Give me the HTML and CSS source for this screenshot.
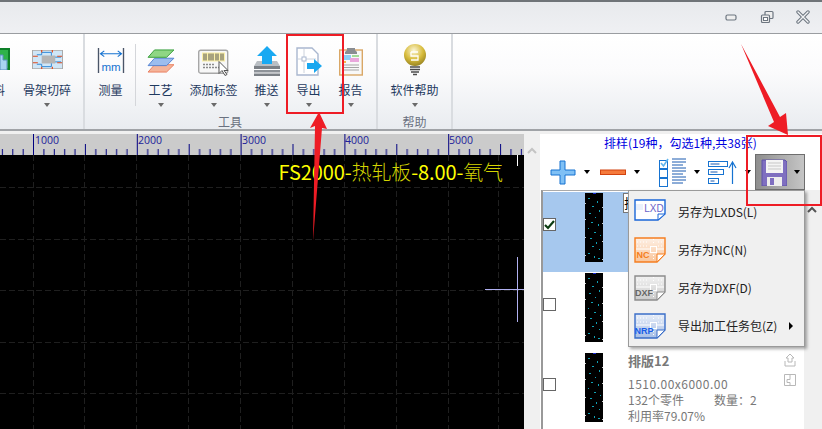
FILE: index.html
```html
<!DOCTYPE html>
<html lang="zh-CN">

<head>
  <meta charset="UTF-8">
  <meta name="viewport" content="width=device-width, initial-scale=1.0">
  <title>排样</title>
  <link rel="stylesheet" href="styles.css">
</head>

<body>

  <!-- shared drawings -->
  <svg class="sprites" width="0" height="0">
    <defs>
      <linearGradient id="docFill" x1="0" y1="0" x2="0" y2="1">
        <stop offset="0" stop-color="#fff" stop-opacity=".75" />
        <stop offset="1" stop-color="#fff" stop-opacity="0" />
      </linearGradient>
    </defs>
    <symbol id="sheet" viewBox="0 0 18 69">
      <rect width="18" height="69" fill="#000" />
      <g fill="#12a0b4">
        <rect x="3" y="5" width="2" height="1" /><rect x="12" y="8" width="1" height="2" /><rect x="7" y="13" width="2" height="1" />
        <rect x="14" y="17" width="1" height="2" /><rect x="4" y="20" width="2" height="1" /><rect x="10" y="24" width="1" height="1" />
        <rect x="6" y="29" width="2" height="1" /><rect x="13" y="31" width="1" height="2" /><rect x="3" y="35" width="1" height="1" />
        <rect x="9" y="39" width="2" height="1" /><rect x="15" y="42" width="1" height="1" /><rect x="5" y="45" width="2" height="1" />
        <rect x="11" y="49" width="1" height="2" /><rect x="7" y="53" width="2" height="1" /><rect x="14" y="56" width="1" height="1" />
        <rect x="3" y="60" width="2" height="1" /><rect x="9" y="63" width="1" height="2" /><rect x="13" y="65" width="2" height="1" />
      </g>
      <g fill="#ccc">
        <rect x="0" y="10" width="1" height="1" /><rect x="17" y="14" width="1" height="1" /><rect x="0" y="26" width="1" height="1" />
        <rect x="17" y="30" width="1" height="1" /><rect x="0" y="44" width="1" height="1" /><rect x="17" y="48" width="1" height="1" />
        <rect x="0" y="62" width="1" height="1" /><rect x="17" y="66" width="1" height="1" />
      </g>
      <rect x="8" y="0" width="3" height="1" fill="#1a2ad0" />
    </symbol>
    <symbol id="doc" viewBox="0 0 32 26">
      <path d="M1 1h30v16l-8 8H1z" fill="#fff" />
      <path d="M1 1h30v16l-8 8H1z" fill="currentColor" fill-opacity=".45" />
      <path d="M1 1h30v16l-8 8H1z" fill="url(#docFill)" />
      <path d="M1 1h30v16l-8 8H1z" fill="none" stroke="currentColor" stroke-width="1.4" />
      <path d="M3 5h11M24 5h6M3 9h11M24 9h6M19.500 2v5M19.500 15v8" stroke="#fff" stroke-dasharray="1 2" />
      <path d="M2 12h14M23 12h7" stroke="#fff" />
      <rect x="16.500" y="9.500" width="6" height="6" fill="none" stroke="#fff" />
      <path d="M23 25v-8h8z" fill="#fff" stroke="currentColor" />
    </symbol>
  </svg>

  <div class="titlebar">
    <svg class="win-btn" width="14" height="14" viewBox="0 0 14 14">
      <rect x="2" y="5" width="10" height="5" rx="1.5" fill="#eee" stroke="#6d7680" stroke-width="1.2" />
    </svg>
    <svg class="win-btn" width="14" height="14" viewBox="0 0 14 14">
      <rect x="5" y="1.5" width="8" height="7" rx="1" fill="#eee" stroke="#6d7680" stroke-width="1.2" />
      <rect x="1.5" y="5" width="8" height="7.5" rx="1" fill="#eee" stroke="#6d7680" stroke-width="1.2" />
      <rect x="3.5" y="7.5" width="4" height="3" fill="#fff" stroke="#6d7680" />
    </svg>
    <svg class="win-btn" width="14" height="14" viewBox="0 0 14 14">
      <path d="M2 2l10 10M12 2L2 12" stroke="#6d7680" stroke-width="3.4" stroke-linecap="round" />
      <path d="M2 2l10 10M12 2L2 12" stroke="#f2f3f5" stroke-width="1.4" stroke-linecap="round" />
    </svg>
  </div>

  <div class="ribbon">
    <div class="group group-edit">
      <div class="tool tool-cut">
        <span class="tool-icon">
          <svg class="icon-stock" width="30" height="22" viewBox="0 0 30 22">
            <rect x="20" y="0" width="10" height="22" fill="#0d7f28" />
            <rect x="20" y="2" width="8" height="18" fill="#2fb24a" />
            <path d="M20 22V7h3v5h4v10z" fill="#a8d4f4" stroke="#5b8fc0" />
          </svg>
        </span>
        <span class="tool-name">料</span>
        <span class="caret"></span>
      </div>
      <div class="tool tool-bone">
        <span class="tool-icon">
          <svg class="icon-bone" width="31" height="19" viewBox="0 0 32 24" preserveAspectRatio="none">
            <rect x=".5" y=".5" width="31" height="23" fill="#cfe6f7" stroke="#a9a9a9" />
            <path d="M5 6h5V3h10v6h10M5 18h5v3h10v-6h10" fill="none" stroke="#1e7fd6" />
            <path d="M10 7h14v10H10z" fill="#b5b5b5" />
            <path d="M10 0v3M21 0v3M1 8h5M1 16h5M26 8h5M26 16h5M10 21v3M21 21v3" stroke="#e04a1c" stroke-width="1.2" />
          </svg>
        </span>
        <span class="tool-name">骨架切碎</span>
        <span class="caret"></span>
      </div>
    </div>

    <div class="group group-tools">
      <div class="tool-row">
        <div class="tool tool-measure">
          <span class="tool-icon">
            <svg class="icon-short" width="28" height="25" viewBox="0 0 28 26">
              <path d="M1 0v26M27 0v26" stroke="#4a5568" stroke-width="1.4" />
              <path d="M3 6h22M7 3L3 6l4 3M21 3l4 3-4 3" fill="none" stroke="#1673d1" stroke-width="1.1" />
              <text x="14" y="24" class="mm-label">mm</text>
            </svg>
          </span>
          <span class="tool-name">测量</span>
        </div>
        <span class="tool-sep"></span>
        <div class="tool tool-craft">
          <span class="tool-icon">
            <svg class="icon-short" width="30" height="24" viewBox="0 0 30 26">
              <path d="M8 17h21l-8 8H1z" fill="#f5b49a" stroke="#e8795a" />
              <path d="M8 10h21l-8 8H1z" fill="#9cbdee" stroke="#4f7fd0" />
              <path d="M8 1h21l-8 8H1z" fill="#8fd684" stroke="#2f9a33" />
            </svg>
          </span>
          <span class="tool-name">工艺</span>
          <span class="caret"></span>
        </div>
        <div class="tool tool-label">
          <span class="tool-icon">
            <svg width="32" height="27" viewBox="0 0 32 26">
              <rect x=".7" y=".7" width="29" height="23" rx="2" fill="#f7f7f7" stroke="#a7a7a7" stroke-width="1.4" />
              <rect x="4" y="3" width="23" height="9" fill="#fbf0a8" />
              <path d="M6 4v7M8 4v7M11 4v7M13 4v7M15 4v7M18 4v7M20 4v7M23 4v7M25 4v7" stroke="#555" stroke-width="1" />
              <path d="M5 15h11M5 18h16" stroke="#8a8a8a" stroke-width="1.4" stroke-dasharray="2 1" />
              <path d="M21 12v12l3-3 3 5 2-1-3-4h4z" fill="#fff" stroke="#555" />
            </svg>
          </span>
          <span class="tool-name">添加标签</span>
          <span class="caret"></span>
        </div>
        <div class="tool tool-push">
          <span class="tool-icon">
            <svg width="26" height="30" viewBox="0 0 26 30">
              <path d="M3 15h20l3 5H0z" fill="#b9bec3" />
              <rect y="20" width="26" height="3" fill="#7b8086" />
              <rect y="24" width="26" height="2.5" fill="#8d9298" />
              <rect y="27.5" width="26" height="2.5" fill="#7b8086" />
              <path d="M13 0l10 10h-5v8H8v-8H3z" fill="#19a9f2" />
            </svg>
          </span>
          <span class="tool-name">推送</span>
          <span class="caret"></span>
        </div>
        <div class="tool tool-export">
          <span class="tool-icon">
            <svg width="26" height="29" viewBox="0 0 26 29">
              <path d="M1 1h15l6 6v21H1z" fill="#fff" stroke="#a9b7cf" stroke-width="1.4" />
              <path d="M2 12h18M8 2v24" stroke="#ccd2dc" />
              <rect x="6" y="10" width="4" height="4" fill="#fff" stroke="#a9b7cf" />
              <path d="M11 16h7v-4l8 7-8 7v-4h-7z" fill="#1aa7ef" />
            </svg>
          </span>
          <span class="tool-name">导出</span>
          <span class="caret"></span>
        </div>
        <div class="tool tool-report">
          <span class="tool-icon">
            <svg width="24" height="30" viewBox="0 0 24 30">
              <rect x=".7" y="4" width="22.6" height="25" fill="#f8f8f8" stroke="#d9a766" stroke-width="1.4" />
              <path d="M8 4V2h8v2l2 2v2H6V6z" fill="#8a8d92" />
              <rect x="4" y="9" width="8" height="5" fill="#8fd0f5" /><rect x="13" y="9" width="7" height="2" fill="#a5dc9a" />
              <rect x="11" y="12" width="9" height="4" fill="#e9a7dc" /><rect x="4" y="15" width="3" height="2" fill="#f4b84a" />
              <path d="M4 19h16M4 21.5h16M4 24h16" stroke="#a5a5a5" />
            </svg>
          </span>
          <span class="tool-name">报告</span>
          <span class="caret"></span>
        </div>
      </div>
      <div class="group-name">工具</div>
    </div>

    <div class="group group-help">
      <div class="tool tool-help">
        <span class="tool-icon">
          <svg width="24" height="32" viewBox="0 0 24 32">
            <defs>
              <radialGradient id="bulb" cx=".45" cy=".3" r=".75">
                <stop offset="0" stop-color="#fbf6d8" />
                <stop offset=".55" stop-color="#d8bc3c" />
                <stop offset="1" stop-color="#8f7c1e" />
              </radialGradient>
            </defs>
            <circle cx="12" cy="11" r="11" fill="url(#bulb)" />
            <path d="M8 9h7M8 9v4h7v4H8" transform="translate(0 -1)" fill="none" stroke="#fff" stroke-width="1.3" />
            <path d="M7 23h10M7 25.500h10M8 28h8M10 30.500h4" stroke="#4b4b4b" stroke-width="1.6" />
          </svg>
        </span>
        <span class="tool-name">软件帮助</span>
        <span class="caret"></span>
      </div>
      <div class="group-name">帮助</div>
    </div>
  </div>

  <div class="workspace">
    <div class="stage">
      <svg class="ruler" width="524" height="21" viewBox="0 0 524 21">
        <defs>
          <pattern id="ticks" x="33" y="0" width="103.800" height="21" patternUnits="userSpaceOnUse">
            <path d="M.5 0v21M52.400 10v11" stroke="#000080" stroke-width="1" />
            <path d="M10.900 15v6M21.300 15v6M31.700 15v6M42 15v6M62.800 15v6M73.200 15v6M83.600 15v6M94 15v6" stroke="#000080" stroke-width="1" />
          </pattern>
        </defs>
        <rect width="524" height="21" fill="#cbcbcb" />
        <rect width="524" height="21" fill="url(#ticks)" />
        <text x="35" y="10" class="ruler-num">1000</text>
        <text x="138" y="10" class="ruler-num">2000</text>
        <text x="242" y="10" class="ruler-num">3000</text>
        <text x="345" y="10" class="ruler-num">4000</text>
        <text x="449" y="10" class="ruler-num">5000</text>
      </svg>
      <div class="canvas">
        <svg class="grid" width="524" height="275" viewBox="0 0 524 275">
          <g stroke="#1f1f1f" stroke-dasharray="6 3">
            <path d="M33.500 0v275M84.500 0v275M136.500 0v275M188.500 0v275M240.500 0v275M292.500 0v275M344.500 0v275M396.500 0v275M448.500 0v275M498.500 0v275" />
            <path d="M0 32.500h524M0 84.500h524M0 135.500h524M0 187.500h524M0 238.500h524" />
          </g>
          <path d="M517.500 0v11" stroke="#fff" />
          <path d="M517.500 102v65M485 134.500h39" stroke="#b0b0f0" />
        </svg>
        <div class="canvas-title">FS2000-<span class="cn">热轧板</span>-8.00-<span class="cn">氧气</span></div>
      </div>
    </div>

    <div class="gutter">
      <svg width="10" height="7" viewBox="0 0 10 7">
        <path d="M1 6l4-4 4 4" fill="none" stroke="#c4c4c4" stroke-width="2" />
      </svg>
    </div>

    <div class="panel">
      <div class="panel-title">排样(19种，勾选1种,共38张)</div>
      <div class="panel-tools">
        <div class="ptool">
          <svg width="26" height="25" viewBox="0 0 26 25">
            <path d="M10 1h5v9h10v5H15v9h-5v-9H1v-5h9z" fill="#7fc0f5" stroke="#1673d1" />
          </svg>
          <span class="drop"></span>
        </div>
        <div class="ptool">
          <svg width="26" height="25" viewBox="0 0 26 25">
            <rect x=".5" y="10" width="25" height="4.500" fill="#f57a3c" stroke="#d2430f" />
          </svg>
          <span class="drop"></span>
        </div>
        <div class="ptool ptool-list">
          <svg width="29" height="29" viewBox="0 0 29 29">
            <g fill="#fff" stroke="#1673d1">
              <rect x=".5" y="2.500" width="8" height="8" /><rect x=".5" y="11.500" width="8" height="8" /><rect x=".5" y="20.500" width="8" height="8" />
            </g>
            <path d="M2 5l2.500 3L9 1" fill="none" stroke="#5fb4ee" stroke-width="1.6" />
            <path d="M13 1h14M13 4h14M13 7h11M13 10h14M13 13h14M13 16h11M13 19h14M13 22h14M13 25h11" stroke="#1a5bb0" />
          </svg>
          <span class="drop"></span>
        </div>
        <div class="ptool ptool-sort">
          <svg width="31" height="25" viewBox="0 0 31 25">
            <g fill="#fff" stroke="#1673d1">
              <rect x=".5" y="1.500" width="19" height="5" /><rect x=".5" y="9.500" width="15" height="5" /><rect x=".5" y="18.500" width="10" height="5" />
            </g>
            <path d="M2.500 4h9M2.500 12h7M2.500 21h4" stroke="#1a5bb0" />
            <path d="M24.500 24V2M21 8l3.500-6L28 8" fill="none" stroke="#1673d1" stroke-width="1.2" />
          </svg>
          <span class="drop"></span>
        </div>
        <div class="ptool ptool-save">
          <svg width="26" height="27" viewBox="0 0 26 27">
            <path d="M1 1h23l2 2v24H1z" fill="#7f6fc0" stroke="#5f52a8" />
            <rect x="5" y="1" width="17" height="13" fill="#f4f4f4" />
            <path d="M7 4h13M7 7h13M7 10h13" stroke="#c7c7c7" />
            <rect x="6" y="18" width="15" height="9" fill="#eee" />
            <rect x="9" y="19" width="4" height="7" fill="#7f6fc0" />
          </svg>
          <span class="drop"></span>
        </div>
      </div>

      <div class="list">
        <div class="row row-on">
          <span class="check check-on">
            <svg width="11" height="10" viewBox="0 0 11 10">
              <path d="M1 5l3 3 6-7" fill="none" stroke="#0c3c12" stroke-width="2.2" />
            </svg>
          </span>
          <svg class="sheet" width="18" height="69"><use href="#sheet" /></svg>
          <span class="row-edit">排</span>
        </div>
        <div class="row">
          <span class="check"></span>
          <svg class="sheet" width="18" height="69"><use href="#sheet" /></svg>
        </div>
        <div class="row">
          <span class="check"></span>
          <svg class="sheet" width="18" height="69"><use href="#sheet" /></svg>
          <div class="row-info">
            <div class="row-name">排版12</div>
            <div class="row-size">1510.00x6000.00</div>
            <div class="row-count"><span>132个零件</span><span>数量：2</span></div>
            <div>利用率79.07%</div>
          </div>
          <div class="row-actions">
            <svg width="12" height="14" viewBox="0 0 12 14">
              <path d="M6 1l4 4H8v4H4V5H2zM1 8v5h10V8" fill="none" stroke="#b8b8b8" />
            </svg>
            <svg width="12" height="12" viewBox="0 0 12 12">
              <path d="M.5.500h11v11H.5zM6 .5v5H3v3h3v3" fill="none" stroke="#b8b8b8" />
            </svg>
          </div>
        </div>
      </div>
      <div class="list-scroll">
        <svg width="10" height="7" viewBox="0 0 10 7">
          <path d="M1 6l4-4 4 4" fill="none" stroke="#555" stroke-width="2" />
        </svg>
      </div>

      <div class="menu">
        <div class="menu-item">
          <svg class="menu-icon icon-lxd" width="32" height="26" viewBox="0 0 32 26">
            <path d="M1 1h30v14l-7 6H1z" fill="#fff" stroke="currentColor" stroke-width="1.4" />
            <path d="M24 21v-6h7z" fill="#fff" stroke="currentColor" />
            <rect x="2" y="5" width="7" height="6" fill="#eaf0fb" />
            <text x="20" y="13" class="icon-text">LXD</text>
          </svg>
          <span>另存为LXDS(L)</span>
        </div>
        <div class="menu-item">
          <svg class="menu-icon icon-nc" width="32" height="26"><use href="#doc" /><text x="9" y="21" class="icon-text">NC</text></svg>
          <span>另存为NC(N)</span>
        </div>
        <div class="menu-item">
          <svg class="menu-icon icon-dxf" width="32" height="26"><use href="#doc" /><text x="10" y="21" class="icon-text">DXF</text></svg>
          <span>另存为DXF(D)</span>
        </div>
        <div class="menu-item">
          <svg class="menu-icon icon-nrp" width="32" height="26"><use href="#doc" /><text x="10" y="21" class="icon-text">NRP</text></svg>
          <span>导出加工任务包(Z)</span>
          <span class="menu-more"></span>
        </div>
      </div>
    </div>
  </div>

  <!-- red annotations drawn over the screenshot -->
  <div class="mark mark-export"></div>
  <div class="mark mark-save"></div>
  <svg class="arrows" width="822" height="429" viewBox="0 0 822 429">
    <path d="M319 112l8 17-5-1-9 113 2-115-5 2z" fill="#ee1c25" />
    <path d="M741 44l39 73 6-4 2 22-20-9 6-4z" fill="#ee1c25" />
  </svg>

</body>

</html>
```

FILE: styles.css
```css
* {
  margin: 0;
  padding: 0;
  box-sizing: border-box;
}

body {
  width: 822px;
  height: 429px;
  overflow: hidden;
  position: relative;
  background-color: #f0f0f0;
  font-family: "Noto Sans CJK SC", "Liberation Sans", sans-serif;
  font-size: 12px;
}

.sprites {
  position: absolute;
}

/* title bar */
.titlebar {
  height: 34px;
  display: flex;
  justify-content: flex-end;
  align-items: center;
  gap: 22px;
  padding: 0 12px 2px 0;
  background: linear-gradient(#e8eaed, #eff0f3);
  border-top: 2px solid #6f7478;
  border-bottom: 1px solid #9a9da1;
}

.win-btn {
  display: block;
}

/* ribbon */
.ribbon {
  height: 97px;
  display: flex;
  overflow: hidden;
  background: linear-gradient(#fff, #fbfbfc 40%, #e9ecf0);
  border-bottom: 2px solid #a0a3a7;
}

.group {
  position: relative;
  border-right: 2px solid #d9dce0;
  flex-shrink: 0;
}

.group-edit {
  width: 85px;
  display: flex;
  justify-content: flex-end;
  padding-right: 10px;
}

.group-tools {
  width: 293px;
  padding-left: 1px;
}

.group-help {
  width: 75px;
  display: flex;
  flex-direction: column;
  align-items: center;
}

.tool-row {
  display: flex;
}

.tool {
  display: flex;
  flex-direction: column;
  align-items: center;
  flex-shrink: 0;
  color: #1f3a5f;
  font-size: 12px;
  line-height: 16px;
  white-space: nowrap;
}

.tool-icon {
  height: 42px;
  display: flex;
  align-items: flex-end;
  justify-content: center;
}

.tool-name {
  margin-top: 6px;
}

.caret {
  margin-top: 5px;
  border-top: 4px solid #6a6a6a;
  border-left: 3px solid transparent;
  border-right: 3px solid transparent;
}

.icon-short {
  margin-bottom: 3px;
}

.icon-bone {
  margin-bottom: 7px;
}

.icon-stock {
  margin-bottom: 6px;
}

.tool-cut {
  width: 22px;
  align-items: flex-end;
  margin-right: 16px;
}

.tool-cut .tool-icon {
  margin-right: -5px;
}

.tool-cut .caret {
  display: none;
}

.tool-bone {
  width: 52px;
}

.tool-measure {
  width: 49px;
}

.tool-sep {
  width: 1px;
  height: 62px;
  margin-top: 10px;
  background-color: #d4d6da;
}

.tool-craft {
  width: 49px;
}

.tool-label {
  width: 57px;
}

.tool-push {
  width: 49px;
}

.tool-export {
  width: 35px;
}

.tool-report {
  width: 49px;
}

.tool-help {
  width: 75px;
}

.group-name {
  position: absolute;
  bottom: -1px;
  left: 0;
  right: 0;
  text-align: center;
  color: #6a7180;
  font-size: 12px;
  line-height: 16px;
}

.group-tools .group-name {
  left: -1px;
}

/* drawing area */
.workspace {
  display: flex;
  margin-top: 3px;
  height: 295px;
}

.stage {
  width: 524px;
  flex-shrink: 0;
}

.ruler {
  display: block;
}

.ruler-num {
  font-family: "Open Sans", "Liberation Sans", sans-serif;
  font-size: 10.500px;
  fill: #20209a;
}

.canvas {
  position: relative;
  height: 274px;
  background-color: #000;
}

.grid {
  display: block;
}

.canvas-title {
  position: absolute;
  top: 3px;
  right: 21px;
  color: #ffff00;
  font-size: 20px;
  line-height: 28px;
  letter-spacing: -0.120px;
  white-space: nowrap;
}

.canvas-title .cn {
  color: #d4d400;
  font-weight: 300;
}

.gutter {
  width: 16px;
  flex-shrink: 0;
  padding: 6px 0 0 3px;
}

/* nest list panel */
.panel {
  position: relative;
  width: 282px;
  background-color: #fff;
}

.panel-title {
  height: 20px;
  padding-left: 64px;
  color: #0000e0;
  font-size: 12px;
  line-height: 18px;
  white-space: nowrap;
}

.panel-tools {
  height: 36px;
  display: flex;
  align-items: center;
  padding-left: 10px;
}

.ptool {
  width: 50px;
  display: flex;
  align-items: center;
}

.drop {
  margin-left: 8px;
  border-top: 4px solid #000;
  border-left: 3.500px solid transparent;
  border-right: 3.500px solid transparent;
}

.ptool-list {
  width: 49px;
  margin-left: 9px;
}

.ptool-list .drop {
  margin-left: 6px;
}

.ptool-sort {
  width: 47px;
}

.ptool-sort .drop {
  margin-left: 6px;
}

.ptool-save {
  width: 50px;
  height: 36px;
  padding-left: 5px;
  background: linear-gradient(90deg, #8e8e8e, #c5c5c5);
  border: 1px solid #6e6e6e;
}

.ptool-save .drop {
  margin-left: 7px;
}

.list {
  width: 264px;
  height: 240px;
  margin-left: 1px;
  border-left: 2px solid #999;
  border-top: 1px solid #aaa;
  padding-top: 1px;
}

.list-scroll {
  position: absolute;
  top: 56px;
  right: 0;
  bottom: 0;
  width: 18px;
  padding: 9px 0 0 3px;
  background-color: #f0f0f0;
}

.row {
  height: 80px;
  display: flex;
  align-items: flex-start;
  position: relative;
}

.row-on {
  background-color: #a6c8ee;
}

.check {
  width: 13px;
  height: 13px;
  margin: 26px 29px 0 0;
  flex-shrink: 0;
  display: flex;
  align-items: center;
  justify-content: center;
  background-color: #fff;
  border: 1px solid #666;
}

.sheet {
  flex-shrink: 0;
  display: block;
  margin-top: 1px;
}

.row-edit {
  position: absolute;
  top: 1px;
  left: 80px;
  width: 12px;
  height: 20px;
  overflow: hidden;
  background-color: #fff;
  border: 1px solid #777;
  font-size: 13px;
  line-height: 18px;
}

.row-info {
  margin-left: 25px;
  color: #787878;
  font-size: 12px;
  line-height: 16px;
}

.row-name {
  font-weight: 700;
  font-size: 13px;
  line-height: 18px;
  margin-bottom: 6px;
}

.row-size {
  letter-spacing: 0.500px;
}

.row-count {
  display: flex;
  gap: 30px;
}

.row-actions {
  position: absolute;
  top: 1px;
  right: 9px;
  display: flex;
  flex-direction: column;
  gap: 7px;
}

.row-actions svg {
  display: block;
}

/* popup menu */
.menu {
  position: absolute;
  top: 56px;
  left: 88px;
  width: 177px;
  height: 157px;
  padding-top: 2px;
  background-color: #f0f0f0;
  border: 1px solid #9a9a9a;
  box-shadow: 2px 2px 3px rgba(0, 0, 0, 0.35);
  color: #222;
  font-size: 12px;
}

.menu-item {
  height: 38px;
  display: flex;
  align-items: center;
  padding-left: 5px;
  white-space: nowrap;
}

.menu-item span:not(.menu-more) {
  margin-bottom: 2px;
}

.menu-icon {
  margin-right: 12px;
  flex-shrink: 0;
}

.icon-lxd {
  color: #1a66d8;
}

.icon-nc {
  color: #f57e20;
}

.icon-dxf {
  color: #8c8c8c;
}

.icon-nrp {
  color: #3a6ec8;
}

.icon-text {
  font-family: "Liberation Sans", sans-serif;
  font-size: 9px;
  font-weight: 700;
  text-anchor: middle;
  fill: currentColor;
}

.icon-dxf .icon-text {
  fill: #666;
}

.icon-nrp .icon-text {
  fill: #1a5ee8;
}

.icon-lxd .icon-text {
  font-weight: 400;
  font-size: 10px;
  fill: #6a63c8;
}

.mm-label {
  font-family: "Liberation Sans", sans-serif;
  font-size: 12px;
  text-anchor: middle;
  fill: #1673d1;
}

.menu-more {
  margin-left: 12px;
  border-left: 4px solid #000;
  border-top: 4px solid transparent;
  border-bottom: 4px solid transparent;
}

/* red annotations */
.mark {
  position: absolute;
  border: 2px solid #ee1c25;
}

.mark-export {
  left: 286px;
  top: 34px;
  width: 58px;
  height: 80px;
}

.mark-save {
  left: 746px;
  top: 135px;
  width: 76px;
  height: 71px;
}

.arrows {
  position: absolute;
  left: 0;
  top: 0;
  pointer-events: none;
}
```
